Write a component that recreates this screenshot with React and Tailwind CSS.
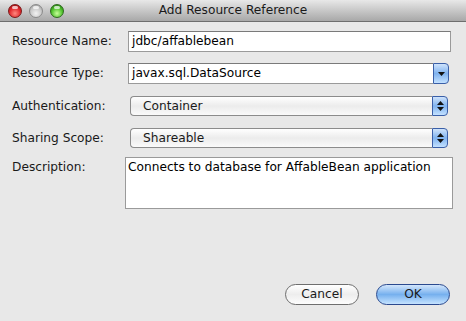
import React from 'react'

const font = { fontFamily: '"DejaVu Sans", "Liberation Sans", sans-serif' }

const TrafficLight = ({ color }) => {
  const styles = {
    red: 'bg-[radial-gradient(circle_at_50%_70%,#ff8a80_0%,#e0262a_55%,#8a0b0e_100%)] border-[#7a1a1a]',
    gray: 'bg-[radial-gradient(circle_at_50%_70%,#f2f2f2_0%,#c8c8c8_55%,#8f8f8f_100%)] border-[#8a8a8a]',
    green: 'bg-[radial-gradient(circle_at_50%_70%,#c8ff9a_0%,#4cbf2a_55%,#1f6a10_100%)] border-[#2f6a1e]',
  }
  return (
    <div className={`relative w-[14px] h-[14px] rounded-full border ${styles[color]}`}>
      <div className="absolute left-[3px] top-[1px] w-[6px] h-[3px] rounded-full bg-white/70" />
    </div>
  )
}

const Label = ({ children, top }) => (
  <div className={`w-[116px] shrink-0 text-[12.2px] text-[#1a1a1a] ${top ? 'self-start pt-[1px]' : ''}`}>
    {children}
  </div>
)

const AquaArrow = ({ double }) => (
  <div className="w-[16px] h-full rounded-r-[4px] border border-[#3a5fa8] bg-gradient-to-b from-[#cfe3fb] via-[#7fb2ef] to-[#c3e1ff] flex flex-col items-center justify-center gap-[2px]">
    {double && (
      <svg width="7" height="4" viewBox="0 0 7 4">
        <path d="M3.5 0 L7 4 L0 4 Z" fill="#111" />
      </svg>
    )}
    <svg width="7" height="4" viewBox="0 0 7 4">
      <path d="M0 0 L7 0 L3.5 4 Z" fill="#111" />
    </svg>
  </div>
)

const PopupButton = ({ value }) => (
  <div className="ml-[2px] w-[318px] h-[20px] flex">
    <div className="flex-1 h-full rounded-l-[4px] border border-r-0 border-[#8c8c8c] bg-gradient-to-b from-[#ffffff] via-[#ececec] to-[#fafafa] flex items-center pl-[12px] text-[12.2px] text-[#1a1a1a]">
      {value}
    </div>
    <AquaArrow double />
  </div>
)

const App = () => {
  return (
    <div className="w-[466px] h-[321px] bg-[#e8e8e8] flex flex-col overflow-hidden" style={font}>
      {/* Title bar */}
      <div className="relative h-[22px] shrink-0 bg-gradient-to-b from-[#e8e8e8] to-[#a8a8a8] border-b border-[#6e6e6e] flex items-center">
        <div className="flex items-center gap-[7px] pl-[8px]">
          <TrafficLight color="red" />
          <TrafficLight color="gray" />
          <TrafficLight color="green" />
        </div>
        <div className="absolute inset-0 flex items-center justify-center text-[12.2px] text-[#1a1a1a]">
          Add Resource Reference
        </div>
      </div>

      {/* Form */}
      <div className="flex flex-col pl-[12px] pt-[9px]">
        <div className="flex items-center h-[21px]">
          <Label>Resource Name:</Label>
          <div className="w-[323px] h-[21px] bg-white border border-[#9a9a9a] border-t-[#7a7a7a] flex items-center pl-[3px] text-[12.2px] text-black">
            jdbc/affablebean
          </div>
        </div>

        <div className="flex items-center h-[21px] mt-[11px]">
          <Label>Resource Type:</Label>
          <div className="w-[321px] h-[21px] flex">
            <div className="flex-1 bg-white border border-r-0 border-[#9a9a9a] border-t-[#7a7a7a] flex items-center pl-[3px] text-[12.2px] text-black">
              javax.sql.DataSource
            </div>
            <AquaArrow />
          </div>
        </div>

        <div className="flex items-center h-[20px] mt-[12px]">
          <Label>Authentication:</Label>
          <PopupButton value="Container" />
        </div>

        <div className="flex items-center h-[20px] mt-[12px]">
          <Label>Sharing Scope:</Label>
          <PopupButton value="Shareable" />
        </div>

        <div className="flex mt-[9px]">
          <Label top>Description:</Label>
          <div className="-ml-[3px] w-[328px] h-[52px] bg-white border border-[#9a9a9a] px-[2px] pt-[1px] text-[12.2px] text-black leading-[17px] whitespace-nowrap">
            Connects to database for AffableBean application
          </div>
        </div>
      </div>

      {/* Buttons */}
      <div className="mt-auto flex justify-end gap-[17px] pr-[16px] pb-[16px]">
        <button className="w-[74px] h-[21px] rounded-full border border-[#6e6e6e] bg-gradient-to-b from-[#ffffff] via-[#ededed] to-[#fdfdfd] text-[12.2px] text-[#1a1a1a] leading-none">
          Cancel
        </button>
        <button className="w-[74px] h-[21px] rounded-full border border-[#2b4a8f] bg-gradient-to-b from-[#d3e6fb] via-[#76b0ee] to-[#c5e3ff] text-[12.2px] text-[#1a1a1a] leading-none">
          OK
        </button>
      </div>
    </div>
  )
}

export default App
